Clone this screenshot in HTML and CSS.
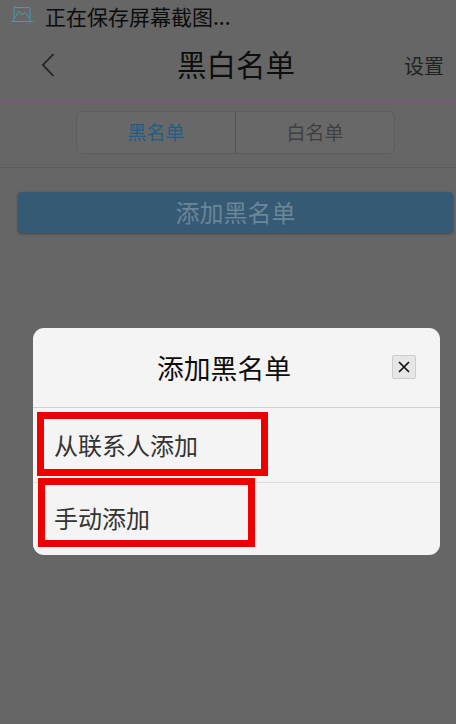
FILE: index.html
```html
<!DOCTYPE html>
<html lang="zh-CN">
<head>
<meta charset="utf-8">
<title>黑白名单</title>
<link rel="stylesheet" href="styles.css">
</head>
<body>
<div class="screen">
  <div class="status">
    <svg class="status-icon" width="22" height="18" viewBox="0 0 22 18" fill="none" stroke="#3f9ea8" stroke-width="1">
      <path d="M3 1.5H19V15.5H3V1.5ZM0 15.5H22M4 1V0M18 17V18"/>
      <path d="M4 12L8 5L11 9L14 6L18 12"/>
    </svg>
    <span class="status-text">正在保存屏幕截图...</span>
  </div>
  <header class="nav">
    <svg class="back" width="14" height="24" viewBox="0 0 14 24" fill="none" stroke="#222" stroke-width="1.8">
      <path d="M12.5 1L2 12L12.5 23"/>
    </svg>
    <h1 class="nav-title">黑白名单</h1>
    <span class="nav-action">设置</span>
  </header>
  <div class="tabs-row">
    <div class="tabs">
      <div class="tab tab-active">黑名单</div>
      <div class="tab">白名单</div>
    </div>
  </div>
  <div class="content">
    <div class="add-btn">添加黑名单</div>
  </div>

  <div class="dialog">
    <div class="dialog-head">
      <span class="dialog-title">添加黑名单</span>
      <span class="close">
        <svg width="14" height="14" viewBox="0 0 14 14" fill="none" stroke="#111" stroke-width="1.7"><path d="M2 2L12 12M12 2L2 12"/></svg>
      </span>
    </div>
    <div class="item item-first">从联系人添加</div>
    <div class="item item-second">手动添加</div>
  </div>
  <div class="mark mark-one"></div>
  <div class="mark mark-two"></div>
</div>
</body>
</html>
```

FILE: styles.css
```css
* { box-sizing: border-box; }
html, body { margin: 0; padding: 0; }
body {
  width: 456px;
  height: 724px;
  overflow: hidden;
  font-family: "Noto Sans CJK SC", "Liberation Sans", sans-serif;
}
.screen {
  position: relative;
  width: 456px;
  height: 724px;
  background: #666666;
  overflow: hidden;
}
.status {
  height: 32px;
  display: flex;
  align-items: center;
  padding-left: 11px;
  gap: 12px;
}
.status-icon { flex: none; margin-top: -3px; }
.status-text {
  font-size: 21px;
  line-height: 32px;
  color: #0c0c0c;
  margin-top: -1px;
}
.nav {
  height: 70px;
  display: flex;
  align-items: center;
  justify-content: space-between;
  padding: 0 12px 4px 41px;
  border-bottom: 1px solid #3f6f83;
  position: relative;
}
.back { flex: none; }
.nav-title {
  position: absolute;
  left: 16px;
  right: 0;
  top: 10px;
  margin: 0;
  text-align: center;
  font-size: 29.5px;
  line-height: 42px;
  font-weight: 400;
  color: #0e0e0e;
  pointer-events: none;
}
.nav-action {
  font-size: 20px;
  color: #222222;
  margin-top: 2px;
}
.tabs-row {
  height: 66px;
  padding-top: 9px;
  padding-left: 15px;
  display: flex;
  justify-content: center;
  border-bottom: 1px solid #5c5c5c;
}
.tabs {
  width: 319px;
  height: 43px;
  display: flex;
  border: 1px solid #5d5d5d;
  border-radius: 6px;
  background: #686868;
}
.tab {
  flex: 1;
  display: flex;
  align-items: center;
  justify-content: center;
  padding-bottom: 2px;
  font-size: 19px;
  color: #404040;
}
.tab + .tab { border-left: 1px solid #525252; }
.tab-active { color: #1e5f86; }
.content { padding: 24px 3px 0 18px; }
.add-btn {
  height: 41px;
  border-radius: 4px;
  background: #365a74;
  box-shadow: 0 1px 3px rgba(0,0,0,.35);
  color: #6b8599;
  font-size: 24px;
  line-height: 40px;
  text-align: center;
}
.dialog {
  position: absolute;
  left: 33px;
  top: 328px;
  width: 407px;
  height: 227px;
  background: #f4f4f5;
  border-radius: 11px;
  display: flex;
  flex-direction: column;
}
.dialog-head {
  position: relative;
  height: 80px;
  flex: none;
  display: flex;
  align-items: center;
  justify-content: center;
  border-bottom: 1px solid #cfcfcf;
}
.dialog-title {
  font-size: 26.8px;
  color: #0c0c0c;
  margin-right: 25px;
}
.close {
  position: absolute;
  left: 359px;
  top: 27px;
  width: 24px;
  height: 24px;
  display: flex;
  align-items: center;
  justify-content: center;
  background: #e6e6e6;
  border: 1px solid #cdcdcd;
  border-radius: 2px;
}
.item {
  padding-left: 21px;
  font-size: 24px;
  color: #333333;
  display: flex;
  align-items: center;
}
.item-first {
  height: 75px;
  flex: none;
  padding-bottom: 2px;
  border-bottom: 1px solid #dcdcdc;
}
.item-second { flex: 1; padding-bottom: 4px; }
.mark {
  position: absolute;
  border: 7px solid #ee0000;
}
.mark-one { left: 37px; top: 412px; width: 231px; height: 64px; }
.mark-two { left: 38px; top: 478px; width: 217px; height: 69px; }
```
